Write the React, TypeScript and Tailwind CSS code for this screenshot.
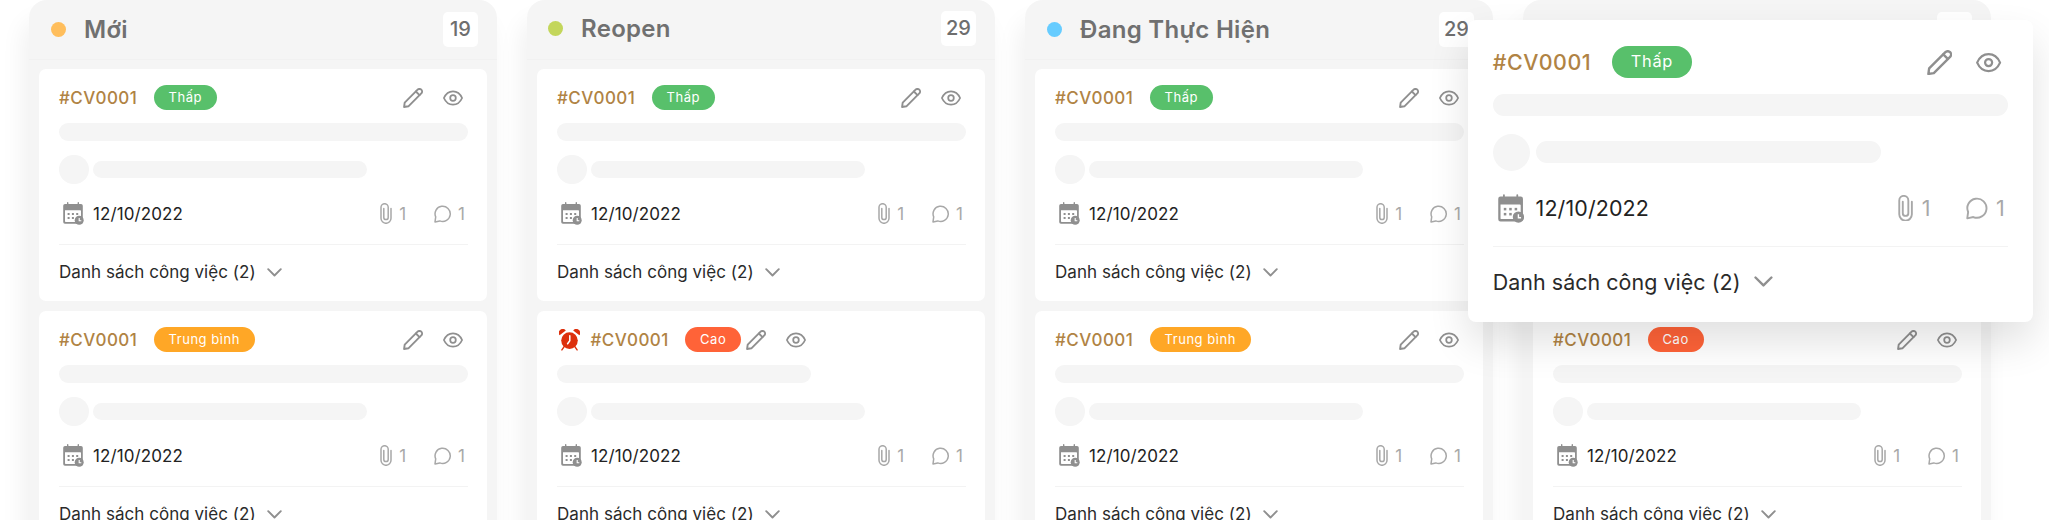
import React from "react";

type Badge = "low" | "mid" | "high";

const badges: Record<Badge, { label: string; cls: string }> = {
  low: { label: "Thấp", cls: "bg-[#58c06b]" },
  mid: { label: "Trung bình", cls: "bg-[#ffa726]" },
  high: { label: "Cao", cls: "bg-[#ff6338]" },
};

function Pencil() {
  return (
    <svg className="h-[20px] w-[20px] shrink-0" viewBox="0 0 20 20" fill="none" stroke="#8f8f8f" strokeWidth="1.9" strokeLinejoin="round" strokeLinecap="round">
      <path d="M1.1 19 L1.7 14.6 L14.6 1.7 a2.55 2.55 0 0 1 3.7 3.7 L5.4 18.3 Z" />
      <path d="M12.9 3.5 L16.5 7.1" />
    </svg>
  );
}

function Eye() {
  return (
    <svg className="h-[20px] w-[20px] shrink-0" viewBox="0 0 20 20" fill="none" stroke="#8f8f8f" strokeWidth="1.75">
      <path d="M0.9 10 C2.8 5.7 6.2 3.3 10 3.3 S17.2 5.7 19.1 10 C17.2 14.3 13.8 16.7 10 16.7 S2.8 14.3 0.9 10 Z" strokeLinejoin="round" />
      <circle cx="10" cy="10" r="2.8" />
    </svg>
  );
}

function CalendarClock() {
  return (
    <svg className="h-[23px] w-[21px] shrink-0" viewBox="0 0 21 23">
      <path fill="#8f8f8f" fillRule="evenodd" d="M2 2 H4 V0.8 a.7 .7 0 0 1 1.4 0 V2 H14.6 V0.8 a.7 .7 0 0 1 1.4 0 V2 H18 a1.8 1.8 0 0 1 1.8 1.8 V20 a1.8 1.8 0 0 1 -1.8 1.8 H2 A1.8 1.8 0 0 1 .2 20 V3.8 A1.8 1.8 0 0 1 2 2 Z M2 8.3 V19.2 a.7 .7 0 0 0 .7 .7 H17.3 a.7 .7 0 0 0 .7 -.7 V9 a.7 .7 0 0 0 -.7 -.7 Z" />
      <g fill="#8f8f8f">
        <rect x="4.6" y="11" width="2" height="2" />
        <rect x="8.9" y="11" width="2" height="2" />
        <rect x="13.2" y="11" width="2" height="2" />
        <rect x="4.6" y="15" width="2" height="2" />
        <rect x="8.9" y="15" width="2" height="2" />
        <circle cx="16.2" cy="18.3" r="4.5" />
      </g>
      <path d="M16.2 16 V18.8 H18.3" fill="none" stroke="#fff" strokeWidth="1.1" />
    </svg>
  );
}

function Clip() {
  return (
    <svg className="h-[21px] w-[12px] shrink-0" viewBox="0 0 12 21" fill="none" stroke="#a8a8a8" strokeWidth="1.5" strokeLinecap="round">
      <path d="M11 5.4 V15.3 a5 5 0 0 1 -10 0 V4.3 a3.6 3.6 0 0 1 7.2 0 V14.4 a2.2 2.2 0 0 1 -4.4 0 V5.4" />
    </svg>
  );
}

function Bubble() {
  return (
    <svg className="h-[18px] w-[18px] shrink-0" viewBox="0 0 18 18" fill="none" stroke="#a8a8a8" strokeWidth="1.5" strokeLinejoin="round">
      <path d="M1 16.9 L1.7 11.9 A7.6 7.6 0 1 1 5.8 15.9 Z" />
    </svg>
  );
}

function Alarm() {
  return (
    <svg className="h-[22px] w-[21px] shrink-0" viewBox="0 0 21 22">
      <g fill="#dd2f0c">
        <path d="M.6 6.2 A3.6 3.6 0 0 1 6.8 1.6 Z" />
        <path d="M20.4 6.2 A3.6 3.6 0 0 0 14.2 1.6 Z" />
        <circle cx="10.5" cy="11.6" r="8.3" />
      </g>
      <path d="M5 17.8 L2.9 20.9 M16 17.8 L18.1 20.9" stroke="#dd2f0c" strokeWidth="1.4" strokeLinecap="round" />
      <path d="M10.8 6.8 V11.8 L8.6 14.8" fill="none" stroke="#fff" strokeWidth="1.5" strokeLinecap="round" />
    </svg>
  );
}

function CardBody({ badge, alarm = false }: { badge: Badge; alarm?: boolean }) {
  const b = badges[badge];
  return (
    <div className="flex h-[232px] flex-col px-5">
      <div className={`mt-4 flex h-[25px] items-center ${alarm ? "" : "justify-between"}`}>
        <div className="flex items-center">
          {alarm && (
            <span className="mr-[11px] ml-[1.5px]">
              <Alarm />
            </span>
          )}
          <span className="w-[79px] text-[17px] leading-[24px] font-medium tracking-[0.45px] text-[#b08344]">#CV0001</span>
          <span className={`ml-[15.5px] rounded-full px-[15px] text-[13px] leading-[25px] tracking-[0.55px] text-white ${b.cls}`}>{b.label}</span>
        </div>
        <div className={`flex gap-[19.5px] pt-px ${alarm ? "ml-[5px]" : "mr-[4.5px]"}`}>
          <Pencil />
          <Eye />
        </div>
      </div>
      <div className={`mt-[13px] h-[17.5px] rounded-full bg-[#f5f5f5] ${alarm ? "w-[254px]" : "w-[409px]"}`} />
      <div className="mt-[14px] flex items-center gap-[4.5px]">
        <div className="h-[29.5px] w-[29.5px] rounded-full bg-[#f5f5f5]" />
        <div className="h-[17.5px] w-[274px] rounded-full bg-[#f5f5f5]" />
      </div>
      <div className="mt-[17.5px] flex h-[24px] items-center justify-between pr-[2px] pl-[4px]">
        <div className="flex items-center gap-[9px]">
          <CalendarClock />
          <span className="text-[17px] leading-[24px] tracking-[0.1px] text-[#222]">12/10/2022</span>
        </div>
        <div className="flex items-center text-[17px] leading-[24px] text-[#a8a8a8]">
          <Clip />
          <span className="ml-[7px]">1</span>
          <span className="ml-[28px]">
            <Bubble />
          </span>
          <span className="ml-[6px]">1</span>
        </div>
      </div>
      <div className="mt-[18px] h-px w-[409px] shrink-0 bg-[#f3f3f3]" />
      <div className="mt-[15.5px] flex items-center gap-[11px]">
        <span className="text-[17px] leading-[24px] tracking-[0.04px] text-[#2a2a2a]">Danh sách công việc (2)</span>
        <svg className="h-[9px] w-[15px]" viewBox="0 0 15 9" fill="none" stroke="#8f8f8f" strokeWidth="1.9" strokeLinecap="round" strokeLinejoin="round">
          <path d="M1.2 1.2 L7.5 7.5 L13.8 1.2" />
        </svg>
      </div>
    </div>
  );
}

interface ColumnData {
  title: string;
  count: number;
  dot: string;
  header: string;
  cards: { badge: Badge; alarm?: boolean }[];
}

const columns: ColumnData[] = [
  { title: "Mới", count: 19, dot: "bg-[#ffbe5c]", header: "pl-[22px]", cards: [{ badge: "low" }, { badge: "mid" }] },
  { title: "Reopen", count: 29, dot: "bg-[#c3d65b]", header: "pb-[2px] pl-[21px]", cards: [{ badge: "low" }, { badge: "high", alarm: true }] },
  { title: "Đang Thực Hiện", count: 29, dot: "bg-[#66ccff]", header: "pl-[22px]", cards: [{ badge: "low" }, { badge: "mid" }] },
  { title: "Chờ Duyệt", count: 29, dot: "bg-[#58c06b]", header: "pl-[22px]", cards: [{ badge: "low" }, { badge: "high" }] },
];

function Column({ title, count, dot, header, cards }: ColumnData) {
  return (
    <section className="w-[468px] shrink-0 rounded-t-[18px] bg-[#f5f5f5] shadow-[-6px_20px_24px_rgba(0,0,0,0.06)]">
      <header className={`flex h-[60px] items-center border-b border-[#f1f1f1] pr-[19px] ${header}`}>
        <span className={`h-[15px] w-[15px] rounded-full ${dot}`} />
        <h2 className="ml-[18px] flex-1 text-[24px] leading-[30px] font-semibold tracking-[0.3px] text-[#707070]">{title}</h2>
        <span className="flex h-[35px] w-[35px] items-center justify-center rounded-[5px] bg-white pb-px text-[20px] font-medium text-[#6e6e6e]">{count}</span>
      </header>
      <div className="flex flex-col gap-[10px] px-[10px] pt-[9px]">
        {cards.map((c, i) => (
          <article key={i} className="rounded-[7px] bg-white">
            <CardBody {...c} />
          </article>
        ))}
      </div>
    </section>
  );
}

export default function App() {
  return (
    <main className="relative h-[520px] w-[2049px] overflow-hidden bg-white font-['Inter','Noto_Sans',sans-serif]">
      <div className="flex gap-[30px] pl-[29px]">
        {columns.map((c) => (
          <Column key={c.title} {...c} />
        ))}
      </div>
      <div className="absolute top-[20px] left-[1467.5px] h-[302px] w-[565px] rounded-[8px] bg-white pt-[6px] shadow-[0_20px_40px_rgba(0,0,0,0.12)]">
        <div className="w-[448px] [zoom:1.261]">
          <CardBody badge="low" />
        </div>
      </div>
    </main>
  );
}
